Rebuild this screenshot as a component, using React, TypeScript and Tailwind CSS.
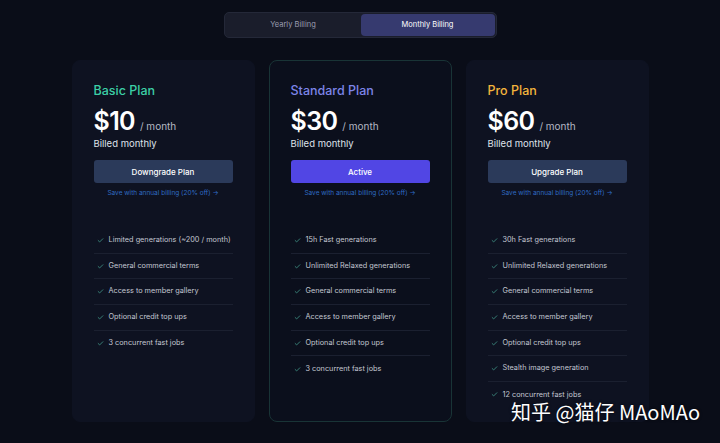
import { Check } from "lucide-react"

interface Plan {
    name: string
    price: string
    color: string
    button: string
    active?: boolean
    features: string[]
}

const plans: Plan[] = [
    {
        name: "Basic Plan",
        price: "$10",
        color: "text-[#3ccfa6]",
        button: "Downgrade Plan",
        features: [
            "Limited generations (~200 / month)",
            "General commercial terms",
            "Access to member gallery",
            "Optional credit top ups",
            "3 concurrent fast jobs",
        ],
    },
    {
        name: "Standard Plan",
        price: "$30",
        color: "text-[#7d85e8]",
        button: "Active",
        active: true,
        features: [
            "15h Fast generations",
            "Unlimited Relaxed generations",
            "General commercial terms",
            "Access to member gallery",
            "Optional credit top ups",
            "3 concurrent fast jobs",
        ],
    },
    {
        name: "Pro Plan",
        price: "$60",
        color: "text-[#f3b43c]",
        button: "Upgrade Plan",
        features: [
            "30h Fast generations",
            "Unlimited Relaxed generations",
            "General commercial terms",
            "Access to member gallery",
            "Optional credit top ups",
            "Stealth image generation",
            "12 concurrent fast jobs",
        ],
    },
]

function PlanCard({ plan }: { plan: Plan }) {
    return (
        <div
            className={`w-[183px] h-[362px] rounded-lg px-[21px] pt-[22px] ${plan.active ? 'bg-[#0b0f1c] border border-[#193436]' : 'bg-[#0e1221] border border-[#0e1221]'}`}
        >
            <h2 className={`text-[12.5px] leading-[16px] font-medium ${plan.color}`}>{plan.name}</h2>
            <div className="mt-[8px] h-[28px] flex items-baseline gap-[5px]">
                <span className="text-[25px] leading-[28px] font-semibold text-white tracking-tight">{plan.price}</span>
                <span className="text-[10px] text-[#b4b8c4]">/ month</span>
            </div>
            <p className="mt-[3px] text-[9.5px] leading-[12px] text-[#dfe2ea]">Billed monthly</p>
            <button
                className={`mt-[10px] w-full h-[23px] rounded-[3px] text-[8px] font-medium text-white ${plan.active ? 'bg-[#5146e4]' : 'bg-[#2b3a5a]'}`}
            >
                {plan.button}
            </button>
            <p className="mt-[5px] text-[6.5px] leading-[10px] text-center whitespace-nowrap text-[#2e6bc4]">Save with annual billing (20% off) →</p>
            <ul className="mt-[30px] flex flex-col">
                {plan.features.map((f, i) => (
                    <li
                        key={f}
                        className={`h-[25.7px] flex items-center gap-[5px] pl-[3px] ${i < plan.features.length - 1 ? 'border-b border-[#1b2030]' : ''}`}
                    >
                        <Check className="w-[7px] h-[7px] shrink-0 text-[#3f8f82]" strokeWidth={3} />
                        <span className="text-[7.3px] whitespace-nowrap text-[#c3c7d1]">{f}</span>
                    </li>
                ))}
            </ul>
        </div>
    )
}

export default function App() {
    return (
        <div className="relative w-[720px] h-[443px] overflow-hidden bg-[#0a0d18] font-['Inter',sans-serif]">
            <div className="pt-[12px] flex justify-center">
                <div className="w-[273px] h-[26px] rounded-[5px] bg-[#1a1d2b] border border-[#242838] flex p-[1px]">
                    <button className="flex-1 text-[7.5px] text-[#9a9db0]">Yearly Billing</button>
                    <button className="w-[134px] rounded-[4px] bg-[#363a6f] text-[7.5px] text-white">Monthly Billing</button>
                </div>
            </div>
            <div className="mt-[22px] flex justify-center gap-[14px]">
                {plans.map(p => (
                    <PlanCard key={p.name} plan={p} />
                ))}
            </div>
            <div className="absolute right-[20px] top-[398px] text-[20px] leading-[28px] text-white font-['Noto_Sans_CJK_SC',sans-serif] [text-shadow:0_0_3px_rgba(0,0,0,0.6)]">
                知乎 @猫仔 MAoMAo
            </div>
        </div>
    )
}
